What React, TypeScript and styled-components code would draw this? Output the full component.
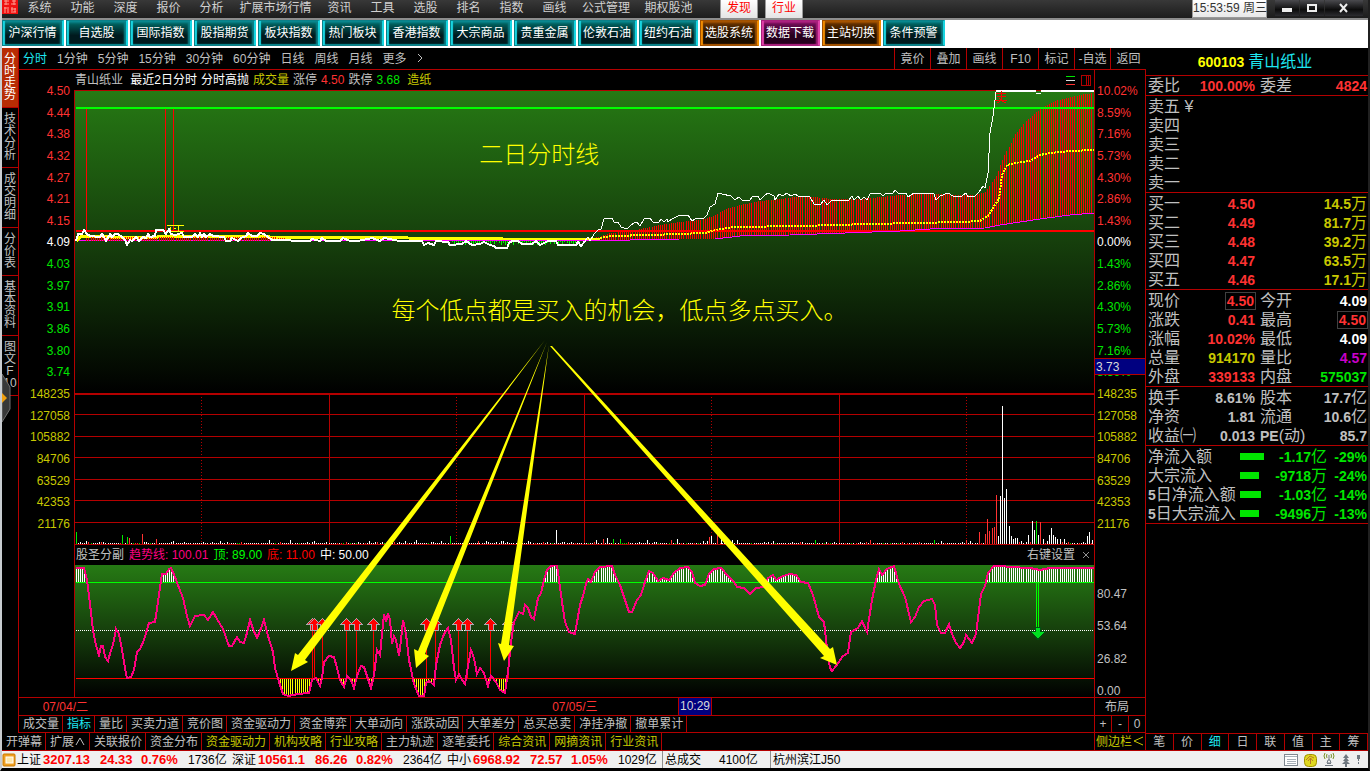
import React from 'react';
import styled, { createGlobalStyle, css } from 'styled-components';

const c = {
  line: '#b40000',
  red: '#ff3232',
  hot: '#ff0000',
  green: '#00e600',
  lime: '#00ff00',
  yellow: '#c8c800',
  bright: '#ffff00',
  cyan: '#1ee6f0',
  grey: '#c0c0c0',
  white: '#ffffff',
  magenta: '#c800c8',
  pink: '#ff0080',
  navy: '#000080',
};

const GlobalStyle = createGlobalStyle`
  *, *::before, *::after { box-sizing: border-box; }
  body {
    margin: 0;
    background: #000;
    color: ${c.grey};
    font: 12px/12px "Liberation Sans", "Noto Sans CJK SC", sans-serif;
  }
  button {
    margin: 0;
    padding: 0;
    border: 0;
    background: none;
    color: inherit;
    font: inherit;
    white-space: nowrap;
    cursor: pointer;
  }
  ul, ol { margin: 0; padding: 0; list-style: none; }
  table { border-collapse: collapse; }
`;

const Shell = styled.div`
  display: flex;
  flex-direction: column;
  height: 100vh;
  min-height: 640px;
  border-left: 2px solid #c8ccd0;
  border-right: 2px solid #202020;
  border-bottom: 3px solid #000;
`;

/* ---------- title bar ---------- */

const TitleBar = styled.header`
  display: flex;
  flex: none;
  height: 20px;
  border-bottom: 2px solid #8c8c8c;
  background: linear-gradient(#383838, #1c1c1c);
`;

const Menu = styled.nav`
  display: flex;
  height: 15px;
`;

const MenuItem = styled.button<{ $w: number }>`
  width: ${p => p.$w}px;
  color: #d0d0d0;
`;

const TopTab = styled.button`
  width: 38px;
  height: 18px;
  margin-left: 7px;
  padding-bottom: 2px;
  border: solid #9a9a9a;
  border-width: 0 1px;
  background: linear-gradient(#fff, #e4e4e4);
  color: ${c.hot};
`;

const TabGroup = styled.div`
  display: flex;
  margin-left: 12px;
`;

const Clock = styled.time`
  width: 75px;
  height: 18px;
  margin-left: auto;
  padding-top: 2px;
  border: 1px solid #999;
  border-top: 0;
  background: linear-gradient(#fff, #e8e8e8);
  color: #333;
  text-align: center;
  white-space: nowrap;
`;

const WindowButtons = styled.div`
  display: flex;
  gap: 1px;
  margin: 0 5px 0 8px;
`;

const WindowButton = styled.button<{ $w: number }>`
  display: grid;
  place-items: center;
  width: ${p => p.$w}px;
  height: 16px;
  background: linear-gradient(#4a4a4e, #0c0c0c 60%, #2c2c30);
`;

/* ---------- shortcut buttons ---------- */

type Tone = 'teal' | 'amber' | 'plum';
const tones: Record<Tone, [string, string, string, string]> = {
  teal: ['#00706c', '#001a1e', '#18d4e0', '#0a8088'],
  amber: ['#6e3600', '#1c0e00', '#f08c00', '#a05000'],
  plum: ['#7c1060', '#26001e', '#e040a8', '#a8207c'],
};

const Shortcuts = styled.nav`
  display: flex;
  flex: none;
  gap: 2px;
  height: 28px;
  padding-bottom: 2px;
  background: #fff;
`;

const Shortcut = styled.button<{ $tone: Tone; $narrow?: boolean }>`
  width: ${p => (p.$narrow ? 59 : 62)}px;
  border: 1px solid ${p => tones[p.$tone][3]};
  border-right: 2px solid ${p => tones[p.$tone][2]};
  background: linear-gradient(${p => tones[p.$tone][0]}, ${p => tones[p.$tone][1]} 60%);
  box-shadow: inset 2px 0 1px ${p => tones[p.$tone][2]}, inset -2px 0 2px ${p => tones[p.$tone][3]},
    inset 0 2px 2px ${p => tones[p.$tone][3]}, inset 0 -1px 1px ${p => tones[p.$tone][3]};
  color: #fff;
`;

/* ---------- workspace ---------- */

const Workspace = styled.div`
  display: flex;
  flex: 1;
  min-height: 0;
`;

const Main = styled.main`
  display: flex;
  flex: 1;
  flex-direction: column;
  min-width: 0;
`;

const Middle = styled.div`
  position: relative;
  display: flex;
  flex: 1;
  min-height: 0;
`;

const SideTabs = styled.nav`
  flex: none;
  width: 17px;
  border-right: 1px solid ${c.line};
`;

const SideTab = styled.button<{ $active?: boolean }>`
  display: block;
  width: 16px;
  padding: 5px 1px 6px;
  border-bottom: 1px solid ${c.line};
  background: ${p => (p.$active ? '#b82c04' : '#000')};
  color: ${p => (p.$active ? '#fff' : c.grey)};
  white-space: normal;
`;

const Drawer = styled.button`
  position: absolute;
  top: 326px;
  left: 0;
  width: 9px;
  height: 52px;
`;

const Board = styled.div`
  display: flex;
  flex: 1;
  flex-direction: column;
  min-width: 0;
`;

const Toolbar = styled.div`
  display: flex;
  flex: none;
  align-items: stretch;
  height: 22px;
  border-bottom: 1px solid ${c.line};
`;

const Periods = styled.div`
  display: flex;
  gap: 10px;
  padding-left: 4px;
`;

const Period = styled.button<{ $active?: boolean }>`
  color: ${p => (p.$active ? c.cyan : c.grey)};
`;

const Tools = styled.div`
  display: flex;
  margin-left: auto;
`;

const Tool = styled.button`
  width: 36px;
  border-left: 1px solid ${c.line};
`;

const Charts = styled.div`
  display: grid;
  flex: 1;
  grid-template-columns: 55px minmax(0, 1fr) 51px;
  grid-template-rows: minmax(0, 1fr);
  min-height: 0;
`;

const rows = css`
  display: grid;
  grid-template-rows: 20px minmax(0, 305fr) minmax(0, 150fr) 20px minmax(0, 132fr);
  grid-template-columns: minmax(0, 1fr);
`;

const LeftAxis = styled.div`
  ${rows}
`;

const RightAxis = styled.div`
  ${rows}
  position: relative;
  border-left: 1px solid ${c.line};
  border-right: 1px solid ${c.line};
  margin-left: -1px;
`;

const Scale = styled.ol<{ $align: 'left' | 'right' }>`
  display: flex;
  grid-row: 1 / 4;
  flex-direction: column;
  justify-content: space-between;
  padding: ${p => (p.$align === 'right' ? '15px 4px 15px 0' : '15px 0 15px 2px')};
  text-align: ${p => p.$align};
`;

const SubScale = styled.ol`
  display: flex;
  grid-row: 5;
  flex-direction: column;
  justify-content: space-between;
  padding: 23px 0 0 2px;
`;

const Ink = styled.li<{ $c: string }>`
  color: ${p => p.$c};
`;

const Cursor = styled.output`
  position: absolute;
  top: 288px;
  left: 0;
  right: 0;
  height: 17px;
  padding: 2px 0 0 1px;
  border: solid ${c.line};
  border-width: 1px 0;
  background: ${c.navy};
  color: #d8d8d8;
`;

const Plots = styled.div`
  ${rows}
  position: relative;
`;

const Caption = styled.div<{ $gap: number; $framed?: boolean }>`
  display: flex;
  align-items: center;
  gap: ${p => p.$gap}px;
  padding: 0 4px 0 1px;
  white-space: nowrap;
  border-left: ${p => (p.$framed ? `1px solid ${c.line}` : '0')};
`;

const Tag = styled.span<{ $c: string }>`
  color: ${p => p.$c};
`;

const CaptionTools = styled.div`
  display: flex;
  align-items: center;
  gap: 6px;
  margin-left: auto;
`;

const Plot = styled.svg`
  display: block;
  width: 100%;
  height: 100%;
  min-height: 0;
  border-left: 1px solid ${c.line};
  border-right: 1px solid ${c.line};
`;

const Overlay = styled.svg`
  position: absolute;
  inset: 0;
  width: 100%;
  height: 100%;
  pointer-events: none;
`;

const Note = styled.p<{ $x: number; $y: number }>`
  position: absolute;
  top: ${p => p.$y}%;
  left: ${p => p.$x}%;
  margin: 0;
  color: ${c.bright};
  font-size: 24px;
  line-height: 24px;
  font-weight: 300;
  white-space: nowrap;
`;

const DateRow = styled.div`
  display: flex;
  flex: none;
  height: 19px;
  border: solid ${c.line};
  border-width: 1px 0;
`;

const DateTrack = styled.div`
  position: relative;
  flex: 1;
  min-width: 0;
  border-right: 1px solid ${c.line};
`;

const DateMark = styled.time<{ $x: number; $boxed?: boolean }>`
  position: absolute;
  top: 0;
  left: ${p => p.$x}%;
  height: 17px;
  padding: 3px 0;
  color: ${c.red};
  white-space: nowrap;
  ${p =>
    p.$boxed &&
    css`
      padding: 2px 1px;
      border: solid ${c.line};
      border-width: 0 1px;
      background: ${c.navy};
      color: #d8d8d8;
    `}
`;

const Layout = styled.button`
  flex: none;
  width: 51px;
  padding: 0 6px 0 0;
  border-right: 1px solid ${c.line};
`;

const TabRow = styled.div<{ $h: number }>`
  display: flex;
  flex: none;
  height: ${p => p.$h}px;
  border-bottom: 1px solid ${c.line};
`;

const Tab = styled.button<{ $c?: string }>`
  padding: 0 3px 0 4px;
  border-right: 1px solid ${c.line};
  color: ${p => p.$c ?? c.grey};
`;

const TabEnd = styled.div`
  display: grid;
  grid-auto-flow: column;
  grid-auto-columns: 1fr;
  width: 52px;
  margin-left: auto;
  border-left: 1px solid ${c.line};
`;

const EndButton = styled.button<{ $c?: string }>`
  border-right: 1px solid ${c.line};
  color: ${p => p.$c ?? c.grey};
`;

/* ---------- quote panel ---------- */

const Quote = styled.aside`
  display: flex;
  flex: none;
  flex-direction: column;
  width: 222px;
`;

const QuoteTitle = styled.h1`
  display: flex;
  align-items: center;
  justify-content: center;
  gap: 4px;
  height: 28px;
  margin: 0;
  padding-right: 4px;
  border-bottom: 1px solid ${c.line};
  color: ${c.cyan};
  font-size: 16px;
  font-weight: 400;
  line-height: 16px;
`;

const Code = styled.strong`
  color: ${c.bright};
  font-size: 14px;
`;

const Section = styled.div<{ $flush?: boolean }>`
  padding-top: ${p => (p.$flush ? 0 : 1)}px;
  border-bottom: 1px solid ${c.line};
`;

const Grid = styled.table`
  width: 100%;
  table-layout: fixed;
`;

const Label = styled.th<{ $w?: number }>`
  width: ${p => (p.$w ? `${p.$w}px` : 'auto')};
  height: 19px;
  padding: 0 0 0 2px;
  font-size: 16px;
  font-weight: 400;
  line-height: 16px;
  text-align: left;
  white-space: nowrap;
`;

const Num = styled.td<{ $c: string; $w?: number }>`
  width: ${p => (p.$w ? `${p.$w}px` : 'auto')};
  height: 19px;
  padding: 0 1px 0 0;
  color: ${p => p.$c};
  font-size: 14px;
  font-weight: 700;
  line-height: 16px;
  text-align: right;
  white-space: nowrap;
`;

const Unit = styled.span`
  font-size: 16px;
  font-weight: 400;
`;

const Boxed = styled.span`
  display: inline-block;
  padding: 0 1px;
  margin-right: -1px;
  border: 1px solid #404040;
`;

const Digit = styled.b`
  font-size: 14px;
`;

const Inset = styled.span`
  padding-left: 2px;
`;

const Meter = styled.span<{ $w: number }>`
  display: block;
  width: ${p => p.$w}px;
  height: 7px;
  background: ${c.green};
`;

const QuoteTabs = styled.div`
  display: grid;
  grid-template-columns: repeat(8, 1fr);
  height: 18px;
  margin-top: auto;
  border: solid ${c.line};
  border-width: 1px 0;
`;

const QuoteTab = styled.button<{ $active?: boolean }>`
  border-right: 1px solid ${c.line};
  color: ${p => (p.$active ? c.cyan : c.grey)};
`;

/* ---------- status bar ---------- */

const StatusBar = styled.footer`
  display: flex;
  flex: none;
  align-items: center;
  height: 17px;
  background: #f0f0f0;
  color: #000;
  white-space: nowrap;
`;

const IndexCell = styled.div`
  display: grid;
  flex: none;
  grid-template-columns: 26px 57px 41px 47px 44px;
  align-items: center;
  width: 215px;
`;

const Rise = styled.b`
  color: ${c.hot};
  font-size: 13px;
`;

const StatusCell = styled.div<{ $w: number }>`
  display: flex;
  gap: 18px;
  width: ${p => p.$w}px;
  height: 17px;
  padding: 3px 0 0 2px;
  border-left: 1px solid #909090;
`;

const StatusIcons = styled.div`
  display: flex;
  align-items: center;
  gap: 6px;
  margin-left: auto;
  padding-right: 7px;
`;

/* ---------- data ---------- */

type Pt = [number, number];
const pts = (s: string): Pt[] => s.trim().split(/\s+/).map(p => p.split(',').map(Number) as Pt);
const str = (p: Pt[]) => p.map(q => q.join(',')).join(' ');

const at = (line: Pt[], x: number) => {
  for (let i = 1; i < line.length; i++) {
    const [x0, y0] = line[i - 1];
    const [x1, y1] = line[i];
    if (x <= x1) return y0 + ((y1 - y0) * (x - x0)) / (x1 - x0 || 1);
  }
  return line[line.length - 1][1];
};

const priceA = pts(`76,241 78,234 82,234 84,230 87,234 90,236 100,237 102,234 104,237 106,241 110,234 112,237
115,234 118,234 122,237 125,240 127,245 130,240 132,241 136,237 139,241 143,237 146,238 148,234 150,237 155,236
156,230 163,230 166,234 169,229 171,234 175,235 182,233 184,237 192,237 195,234 198,237 200,233 202,237 204,234
206,237 210,234 213,236 224,237 226,241 230,241 232,238 238,241 241,238 246,236 248,233 252,236 257,236 260,233
264,234 272,240 310,241 312,239 320,241 322,238 326,241 340,241 343,238 350,241 358,241 372,238 380,241 384,238
400,241 422,241 424,245 428,243 434,245 436,241 448,242 450,245 462,244 466,241 472,245 480,244 484,242 490,245
494,246 496,248 507,248 509,243 512,241 518,241 522,244 532,244 536,241 540,245 548,241 556,241 558,245 576,245
578,242 581,246 585,241`);
const priceB = pts(`585,241 588,237 590,241 594,234 598,230 601,229 604,219 612,218 614,222 618,222 621,227 627,229
630,226 634,223 637,222 640,226 644,219 650,218 653,222 659,222 661,219 664,222 667,219 668,222 672,219 678,216
688,215 692,221 695,219 704,218 707,215 710,207 715,204 718,193 722,194 731,196 735,200 739,197 743,201 750,200
753,196 758,196 760,200 764,196 768,193 774,196 775,200 779,194 783,196 787,193 791,196 795,194 798,196 810,197
814,204 820,205 824,200 827,205 832,200 849,200 852,196 854,200 858,196 861,200 864,197 867,200 870,194 880,193
883,196 886,193 893,193 895,190 898,193 906,193 908,197 914,193 934,194 936,200 940,196 948,193 953,196 962,196
966,193 968,197 975,196 979,192 983,186 985,188 988,173 990,133 993,116 996,92`);
const envelope = pts(`591,239 600,236 610,233 630,231 645,228 660,225 680,222 700,220 710,217 717,214 725,209
740,205 760,201 780,199 800,196 815,197 830,199 860,199 880,197 900,195 920,194 940,194 960,195 975,195 985,192
990,185 996,176 1000,165 1005,153 1010,145 1015,134 1025,122 1040,109 1055,101 1070,97 1085,94 1094,93`);
const base = pts(`76,241 630,240 680,239 715,239 740,236 790,235 845,233 900,231 930,229 985,228 1000,225
1040,219 1070,215 1094,213`);
const avgA = pts(`76,241 80,237 90,236 110,237 150,238 165,236 200,236 270,237 408,238 503,239 600,239`);
const avgB = pts(`600,238 612,236 650,235 705,233 712,231 720,229 735,227 800,226 870,224 960,222 980,221 988,216
995,205 999,199 1002,175 1007,165 1020,162 1030,161 1040,155 1050,153 1070,151 1094,150`);
const trend = pts(`76,568 84,568 87,580 90,604 93,630 96,645 99,655 101,646 103,646 105,657 108,661 111,650 113,645
116,629 119,634 122,650 125,668 127,678 131,677 134,670 137,652 140,649 144,640 149,623 155,622 158,602 162,574
166,574 169,569 171,568 175,577 179,588 183,598 187,616 190,626 195,616 204,615 208,620 213,612 217,619 223,629
229,646 232,646 237,637 240,642 244,643 247,633 250,620 253,629 257,638 260,631 264,620 268,636 273,652 275,668
279,682 283,694 288,696 298,694 309,693 312,680 316,678 320,686 322,678 324,662 329,656 334,657 337,668 340,680
344,687 347,676 351,680 354,688 357,676 361,666 364,667 368,679 371,688 374,675 377,650 380,655 384,614 386,622
388,613 390,620 392,644 394,636 396,640 399,656 401,640 403,620 406,634 409,660 414,684 419,696 424,696 426,683
429,681 434,685 436,665 440,645 444,634 448,628 451,640 454,668 456,680 459,674 462,680 465,684 468,666 471,650
474,658 477,674 480,668 484,673 488,686 491,676 496,682 500,690 505,693 508,672 511,643 514,622 519,612 523,614
525,605 528,608 531,617 534,619 538,598 541,593 544,580 547,570 551,566 557,565 559,580 562,602 565,622 569,632
575,634 580,605 583,596 586,584 588,579 591,582 595,572 600,567 612,566 615,575 620,585 625,600 629,612 632,612
637,600 641,595 645,582 649,571 653,573 658,581 663,578 669,580 674,573 680,568 688,567 692,572 695,583 700,586
705,585 709,574 714,569 721,568 728,576 734,582 737,587 744,588 750,594 756,588 764,587 768,578 773,575 776,580
783,576 790,574 796,575 801,582 808,583 813,595 819,617 824,622 827,648 830,668 832,671 836,666 843,656 848,653
851,632 858,628 862,621 867,632 872,600 876,580 879,569 882,575 887,569 894,566 899,584 905,597 911,622 915,617
919,607 924,601 932,599 935,605 937,625 941,633 945,633 949,624 952,634 956,643 960,648 964,642 966,635 972,643
976,634 979,610 981,594 985,586 988,573 994,566 1002,566 1010,567 1030,568 1040,570 1050,568 1094,568`);

const range = (a: number, b: number, step: number) => {
  const out: number[] = [];
  for (let i = a; i < b; i += step) out.push(i);
  return out;
};

// One slot per trading minute: 17 columns for every 8 minutes.
const minutes = range(-447, 32, 1).map(n => 1026 + 2 * n + Math.floor(n / 8));

const bars = (xs: number[], top: (x: number) => number, bottom: (x: number) => number) =>
  xs.map(x => `M${x},${Math.round(top(x))}V${Math.round(bottom(x))}h1V${Math.round(top(x))}z`).join('');

const envelopeBars = bars(minutes.filter(x => x > 590), x => at(envelope, x), x => at(base, x));
const dipBars = bars(minutes.filter(x => x > 450 && x < 580), () => 241, x => 242 + ((x * 7) % 4));
const riseBars = bars(minutes.filter(x => x > 84 && x < 285), x => 238 - ((x * 3) % 2), () => 241);
const topBars = bars(minutes.filter(x => at(trend, x) < 581), x => at(trend, x), () => 582);
const lowBars = bars(minutes.filter(x => at(trend, x) > 680), () => 679, x => at(trend, x));

type Spike = [number, number, string];
const spikes: Spike[] = [
  [76, 12, 'g'], [122, 9, 'g'], [127, 7, 'g'], [129, 6, 'r'], [142, 10, 'r'], [156, 5, 'r'], [220, 3, 'w'],
  [269, 4, 'w'], [290, 4, 'w'], [416, 4, 'w'], [450, 8, 'g'], [478, 3, 'r'], [556, 14, 'w'], [596, 4, 'w'],
  [603, 5, 'r'], [607, 6, 'w'], [613, 5, 'g'], [620, 5, 'g'], [647, 4, 'w'], [671, 4, 'r'], [677, 5, 'w'],
  [709, 7, 'r'], [711, 8, 'w'], [717, 10, 'r'], [721, 7, 'w'], [732, 4, 'w'], [737, 4, 'w'], [815, 4, 'g'],
  [870, 4, 'r'], [934, 4, 'g'], [966, 4, 'r'], [979, 12, 'r'], [985, 10, 'r'], [987, 25, 'r'], [989, 13, 'r'],
  [992, 16, 'r'], [994, 17, 'r'], [996, 49, 'r'], [998, 8, 'w'], [1000, 48, 'w'], [1002, 138, 'w'],
  [1004, 46, 'w'], [1006, 55, 'w'], [1009, 18, 'w'], [1011, 8, 'w'], [1013, 5, 'w'], [1015, 6, 'w'], [1017, 6, 'w'],
  [1028, 9, 'w'], [1032, 23, 'w'], [1034, 14, 'w'], [1036, 23, 'g'], [1038, 9, 'w'], [1040, 22, 'r'],
  [1043, 5, 'w'], [1049, 9, 'w'], [1051, 16, 'w'], [1053, 9, 'w'], [1055, 7, 'w'], [1057, 5, 'w'], [1060, 5, 'w'],
  [1064, 5, 'w'], [1087, 8, 'w'], [1089, 12, 'w'], [1092, 4, 'w'],
];
const hue: Record<string, string> = { g: c.green, r: c.red, w: '#fff' };

const upMarks = [312, 314, 322, 346, 356, 373, 426, 435, 458, 467, 490, 508];

const priceScale = ['4.50', '4.44', '4.38', '4.32', '4.27', '4.21', '4.15', '4.09', '4.03', '3.97', '3.91', '3.86', '3.80', '3.74'];
const pctScale = ['10.02%', '8.59%', '7.16%', '5.73%', '4.30%', '2.86%', '1.43%', '0.00%', '1.43%', '2.86%', '4.30%', '5.73%', '7.16%', '8.59%'];
const volScale = ['148235', '127058', '105882', '84706', '63529', '42353', '21176'];
const scaleColour = (i: number) => (i < 7 ? c.red : i === 7 ? '#fff' : i < 14 ? c.green : c.yellow);

const menu: [string, number][] = [
  ['系统', 43], ['功能', 43], ['深度', 43], ['报价', 43], ['分析', 43], ['扩展市场行情', 85], ['资讯', 43],
  ['工具', 43], ['选股', 43], ['排名', 43], ['指数', 43], ['画线', 43], ['公式管理', 60], ['期权股池', 65],
];
const shortcuts: [string, Tone, boolean][] = [
  ['沪深行情', 'teal', false], ['自选股', 'teal', false], ['国际指数', 'teal', false], ['股指期货', 'teal', false],
  ['板块指数', 'teal', false], ['热门板块', 'teal', false], ['香港指数', 'teal', false], ['大宗商品', 'teal', false],
  ['贵重金属', 'teal', false], ['伦敦石油', 'teal', true], ['纽约石油', 'teal', true], ['选股系统', 'amber', true],
  ['数据下载', 'plum', true], ['主站切换', 'amber', true], ['条件预警', 'teal', false],
];
const sideTabs = ['分时走势', '技术分析', '成交明细', '分价表', '基本资料', '图文F 10'];
const periods = ['分时', '1分钟', '5分钟', '15分钟', '30分钟', '60分钟', '日线', '周线', '月线', '更多'];
const tools = ['竟价', '叠加', '画线', 'F10', '标记', '-自选', '返回'];
const tabs1 = ['成交量', '指标', '量比', '买卖力道', '竞价图', '资金驱动力', '资金博弈', '大单动向', '涨跌动因', '大单差分', '总买总卖', '净挂净撤', '撤单累计'];
const tabs2 = ['开弹幕', '扩展', '关联报价', '资金分布', '资金驱动力', '机构攻略', '行业攻略', '主力轨迹', '逐笔委托', '综合资讯', '网摘资讯', '行业资讯'];
const tabs2Yellow = ['资金驱动力', '机构攻略', '行业攻略', '综合资讯', '网摘资讯', '行业资讯'];
const quoteTabs = ['笔', '价', '细', '日', '联', '值', '主', '筹'];

const buys = [
  ['买一', '4.50', '14.5'], ['买二', '4.49', '81.7'], ['买三', '4.48', '39.2'],
  ['买四', '4.47', '63.5'], ['买五', '4.46', '17.1'],
];
type Pair = { a: string; av: string; ac: string; abox?: boolean; b: React.ReactNode; bv: string; bc: string; bbox?: boolean; unit?: string };
const summary: Pair[] = [
  { a: '现价', av: '4.50', ac: c.red, abox: true, b: '今开', bv: '4.09', bc: '#fff' },
  { a: '涨跌', av: '0.41', ac: c.red, b: '最高', bv: '4.50', bc: c.red, bbox: true },
  { a: '涨幅', av: '10.02%', ac: c.red, b: '最低', bv: '4.09', bc: '#fff' },
  { a: '总量', av: '914170', ac: c.yellow, b: '量比', bv: '4.57', bc: c.magenta },
  { a: '外盘', av: '339133', ac: c.red, b: '内盘', bv: '575037', bc: c.green },
];
const capital: Pair[] = [
  { a: '换手', av: '8.61%', ac: c.grey, b: '股本', bv: '17.7', bc: c.grey, unit: '亿' },
  { a: '净资', av: '1.81', ac: c.grey, b: '流通', bv: '10.6', bc: c.grey, unit: '亿' },
  { a: '收益㈠', av: '0.013', ac: c.grey, b: <><Digit>PE</Digit>(动)</>, bv: '85.7', bc: c.grey },
];
const flows: [string, string, number, string, string, string][] = [
  ['', '净流入额', 24, '-1.17', '亿', '-29%'],
  ['', '大宗流入', 19, '-9718', '万', '-24%'],
  ['5', '日净流入额', 21, '-1.03', '亿', '-14%'],
  ['5', '日大宗流入', 19, '-9496', '万', '-13%'],
];
const indices = [
  ['上证', '3207.13', '24.33', '0.76%', '1736亿'],
  ['深证', '10561.1', '86.26', '0.82%', '2364亿'],
  ['中小', '6968.92', '72.57', '1.05%', '1029亿'],
];

/* ---------- pieces ---------- */

const Backdrop = ({ id, x, y, w, h }: { id: string; x: number; y: number; w: number; h: number }) => (
  <>
    <defs>
      <linearGradient id={id} x1="0" y1="0" x2="0" y2="1">
        <stop offset="0" stopColor="#267a14" />
        <stop offset="0.5" stopColor="#163f0c" />
        <stop offset="1" stopColor="#000" />
      </linearGradient>
    </defs>
    <rect x={x} y={y} width={w} height={h} fill={`url(#${id})`} />
  </>
);

const PriceChart = () => (
  <Plot viewBox="75 90 1019 305" preserveAspectRatio="none" shapeRendering="crispEdges" fill="none" role="img" aria-label="分时走势">
    <Backdrop id="priceFill" x={75} y={90} w={1019} h={303} />
    <path d="M75,90.5H1094" stroke={c.line} />
    <path d="M86.5,108V231M165.5,108V231M173.5,108V231" stroke={c.hot} />
    <path d={envelopeBars} fill={c.hot} />
    <path d="M76,108H1094" stroke={c.lime} strokeWidth="2" />
    <path d="M76,231H1094" stroke={c.hot} strokeWidth="2" />
    <path d={dipBars} fill={c.lime} />
    <polyline points={str(base)} stroke="#ff00ff" />
    <polyline points={str(avgA)} stroke={c.bright} strokeWidth="3" />
    <path d={riseBars} fill={c.hot} />
    <polyline points={str(avgB)} stroke={c.bright} strokeWidth="2" strokeDasharray="2 1" />
    <polyline points={str(priceA)} stroke="#fff" strokeWidth="2" />
    <polyline points={str(priceB)} stroke="#fff" />
    <path d="M996,91H1036M1041,91H1094" stroke="#fff" strokeWidth="2" />
    <path d="M1036,93.5H1041" stroke="#fff" />
    <path d="M167,225.5h17M171,231.5h13M170,227v3M178,226v5M174,228h2" stroke={c.bright} />
    <path d="M996,93.5h10M1001.5,91v5M997,96.5h9M999,98.5l2,1M995,100.5h12M1001.5,97v3l-4,3M1002,101l4,2" stroke={c.hot} />
    <path d="M75,394H1094" stroke={c.line} strokeWidth="2" />
  </Plot>
);

const VolumeChart = () => (
  <Plot viewBox="75 395 1019 150" preserveAspectRatio="none" shapeRendering="crispEdges" fill="none" role="img" aria-label="成交量">
    <path d="M75,414.5H1094M75,436.5H1094M75,457.5H1094M75,479.5H1094M75,500.5H1094M75,522.5H1094" stroke={c.line} />
    <path d="M329.5,395V544M584.5,395V544M839.5,395V544" stroke={c.line} />
    <path d="M201.5,397V544M456.5,397V544M711.5,397V544M966.5,397V544" stroke={c.line} strokeDasharray="1 2" />
    {minutes.map(x => {
      const k = (x * 37 + ((x * x) % 61)) % 23;
      const h = k === 0 ? 3 : k < 4 ? 2 : 1;
      const colour = k === 5 || k === 2 ? c.red : k === 9 || k === 13 ? c.green : '#fff';
      return <rect key={x} x={x} y={544 - h} width="1" height={h} fill={colour} />;
    })}
    {spikes.map(([x, h, k]) => (
      <rect key={x} x={x} y={544 - h} width="1" height={h} fill={hue[k]} />
    ))}
    <path d="M75,544.5H1094" stroke={c.line} />
  </Plot>
);

const TrendChart = () => (
  <Plot viewBox="75 565 1019 132" preserveAspectRatio="none" shapeRendering="crispEdges" fill="none" role="img" aria-label="趋势线">
    <Backdrop id="trendFill" x={75} y={565} w={1019} h={132} />
    <path d={topBars} fill="#fff" />
    <path d={lowBars} fill={c.bright} />
    <path d="M76,582.5H1094" stroke={c.lime} />
    <path d="M76,630.5H1094" stroke="#fff" strokeDasharray="1 1" />
    <path d="M76,678.5H1094" stroke={c.hot} />
    {upMarks.map(x => (
      <g key={x}>
        <path d={`M${x + 0.5},630V678`} stroke={c.hot} />
        <path d={`M${x + 0.5},619l5,5h-3v6h-4v-6h-3z`} fill={c.hot} stroke="#b0a8b0" strokeWidth="2" paintOrder="stroke" />
      </g>
    ))}
    <polyline points={str(trend)} stroke={c.pink} strokeWidth="2" />
    <path d="M1036.5,582V630M1038.5,582V630" stroke={c.lime} />
    <path d="M1036,628h4v4h4l-6,7l-6,-7h4z" fill="#00e020" stroke="#005010" strokeWidth="2" paintOrder="stroke" />
  </Plot>
);

const pairValue = (v: string, boxed?: boolean) => (boxed ? <Boxed>{v}</Boxed> : v);

const Pairs = ({ data }: { data: Pair[] }) => (
  <Section>
    <Grid>
      <tbody>
        {data.map(r => (
          <tr key={r.a}>
            <Label $w={50}>{r.a}</Label>
            <Num $w={60} $c={r.ac}>{pairValue(r.av, r.abox)}</Num>
            <Label $w={56}><Inset>{r.b}</Inset></Label>
            <Num $c={r.bc}>{pairValue(r.bv, r.bbox)}{r.unit && <Unit>{r.unit}</Unit>}</Num>
          </tr>
        ))}
      </tbody>
    </Grid>
  </Section>
);

export default function App() {
  return (
    <Shell>
      <GlobalStyle />
      <TitleBar>
        <svg width="16" height="14" viewBox="0 0 16 14" aria-hidden="true">
          <rect width="16" height="14" fill="#f01010" />
          <path d="M2,1h5M4,0v5M2,4h5M10,1h4M12,0v5M9,4h5M2,8h5M3,7v6M6,9v4M10,7v6M9,9h5M13,8v4M11,12h3" stroke="#ff9c90" fill="none" />
        </svg>
        <Menu>
          {menu.map(([t, w]) => <MenuItem key={t} $w={w}>{t}</MenuItem>)}
        </Menu>
        <TabGroup>
          <TopTab>发现</TopTab>
          <TopTab>行业</TopTab>
        </TabGroup>
        <Clock>15:53:59 周三</Clock>
        <WindowButtons>
          <WindowButton $w={24} aria-label="最小化">
            <svg width="12" height="10"><rect x="1" y="5" width="10" height="4" fill="#eee" /></svg>
          </WindowButton>
          <WindowButton $w={24} aria-label="最大化">
            <svg width="12" height="10"><rect x="2" y="2" width="8" height="6" fill="none" stroke="#eee" strokeWidth="2" /></svg>
          </WindowButton>
          <WindowButton $w={38} aria-label="关闭">
            <svg width="10" height="10"><path d="M1,1L8,9M8,1L1,9" stroke="#eee" strokeWidth="2" /></svg>
          </WindowButton>
        </WindowButtons>
      </TitleBar>

      <Shortcuts>
        {shortcuts.map(([t, tone, narrow]) => (
          <Shortcut key={t} $tone={tone} $narrow={narrow}>{t}</Shortcut>
        ))}
      </Shortcuts>

      <Workspace>
        <Main>
          <Middle>
            <SideTabs>
              {sideTabs.map((t, i) => <SideTab key={t} $active={i === 0}>{t}</SideTab>)}
            </SideTabs>
            <Drawer aria-label="展开侧栏">
              <svg width="9" height="52" viewBox="0 0 9 52">
                <path d="M0,0L8,13V35L0,48z" fill="#383838" stroke="#707070" />
                <path d="M0,19L5,24L0,29z" fill="#f0a010" />
              </svg>
            </Drawer>
            <Board>
              <Toolbar>
                <Periods>
                  {periods.map((t, i) => <Period key={t} $active={i === 0}>{t}</Period>)}
                  <Period aria-label="更多周期">
                    <svg width="6" height="10"><path d="M1,1L5,5L1,9" fill="none" stroke={c.grey} /></svg>
                  </Period>
                </Periods>
                <Tools>
                  {tools.map(t => <Tool key={t}>{t}</Tool>)}
                </Tools>
              </Toolbar>
              <Charts>
                <LeftAxis>
                  <Scale $align="right">
                    {[...priceScale, ...volScale].map((t, i) => <Ink key={t} $c={scaleColour(i)}>{t}</Ink>)}
                  </Scale>
                </LeftAxis>
                <Plots>
                  <Caption $gap={4}>
                    <span>青山纸业</span>
                    <Tag $c={c.white}>&nbsp;最近2日分时</Tag>
                    <Tag $c={c.white}>分时高抛</Tag>
                    <Tag $c={c.yellow}>成交量</Tag>
                    <span>涨停</span>
                    <Tag $c={c.red}>4.50</Tag>
                    <span>跌停</span>
                    <Tag $c={c.green}>3.68</Tag>
                    <Tag $c={c.yellow}>&nbsp;造纸</Tag>
                    <CaptionTools>
                      <svg width="9" height="10" shapeRendering="crispEdges">
                        <path d="M0,1.5h9" stroke={c.green} /><path d="M0,5.5h9" stroke="#ddd" /><path d="M0,9.5h9" stroke={c.red} />
                      </svg>
                      <svg width="10" height="11" shapeRendering="crispEdges">
                        <path d="M.5,.5h9v10h-9zM5.5,0v11M7.5,0v11" fill="none" stroke={c.line} />
                      </svg>
                    </CaptionTools>
                  </Caption>
                  <PriceChart />
                  <VolumeChart />
                  <Caption $gap={5} $framed>
                    <span>股圣分副</span>
                    <Tag $c={c.pink}>趋势线: 100.01</Tag>
                    <Tag $c={c.lime}>顶: 89.00</Tag>
                    <Tag $c={c.hot}>底: 11.00</Tag>
                    <Tag $c={c.white}>中: 50.00</Tag>
                    <CaptionTools>
                      <span>右键设置</span>
                      <svg width="10" height="8"><path d="M2,1L8,7M8,1L2,7" stroke="#909090" /></svg>
                    </CaptionTools>
                  </Caption>
                  <TrendChart />
                  <Note $x={39.7} $y={11.7}>二日分时线</Note>
                  <Note $x={31.1} $y={36.6}>每个低点都是买入的机会，低点多点买入。</Note>
                  <Overlay viewBox="74 70 1021 627" preserveAspectRatio="none" fill={c.bright}>
                    <polygon points="545,340 298,655 295,653 291,671 308,662 305,660" />
                    <polygon points="547,342 418,651 414,649 416,668 429,656 425,654" />
                    <polygon points="549,345 501,644 498,643 504,661 514,646 509,645" />
                    <polygon points="550,346 552,346 830,649 833,647 837,665 820,658 824,656" />
                  </Overlay>
                </Plots>
                <RightAxis>
                  <Scale $align="left">
                    {[...pctScale, ...volScale].map((t, i) => <Ink key={i} $c={scaleColour(i)}>{t}</Ink>)}
                  </Scale>
                  <Cursor>3.73</Cursor>
                  <SubScale>
                    {['80.47', '53.64', '26.82', '0.00'].map(t => <Ink key={t} $c={c.grey}>{t}</Ink>)}
                  </SubScale>
                </RightAxis>
              </Charts>
              <DateRow>
                <DateTrack>
                  <DateMark $x={2.2}>07/04/二</DateMark>
                  <DateMark $x={49.6}>07/05/三</DateMark>
                  <DateMark $x={61.3} $boxed>10:29</DateMark>
                </DateTrack>
                <Layout>布局</Layout>
              </DateRow>
              <TabRow $h={17}>
                {tabs1.map((t, i) => <Tab key={t} $c={i === 1 ? c.cyan : undefined}>{t}</Tab>)}
                <TabEnd>
                  <EndButton>+</EndButton>
                  <EndButton>-</EndButton>
                  <EndButton>0</EndButton>
                </TabEnd>
              </TabRow>
            </Board>
          </Middle>
          <TabRow $h={18}>
            {tabs2.map(t => (
              <Tab key={t} $c={tabs2Yellow.includes(t) ? c.yellow : undefined}>
                {t}
                {t === '扩展' && <svg width="12" height="9"><path d="M2,8L6,1L10,8" fill="none" stroke={c.grey} /></svg>}
              </Tab>
            ))}
            <TabEnd>
              <EndButton $c={c.yellow}>
                侧边栏
                <svg width="12" height="10"><path d="M11,1L2,5L11,9" fill="none" stroke={c.yellow} /></svg>
              </EndButton>
            </TabEnd>
          </TabRow>
        </Main>

        <Quote>
          <QuoteTitle><Code>600103</Code>青山纸业</QuoteTitle>
          <Section $flush>
            <Grid>
              <tbody>
                <tr>
                  <Label $w={50}>委比</Label>
                  <Num $w={60} $c={c.red}>100.00%</Num>
                  <Label $w={56}><Inset>委差</Inset></Label>
                  <Num $c={c.red}>4824</Num>
                </tr>
              </tbody>
            </Grid>
          </Section>
          <Section>
            <Grid>
              <tbody>
                {['卖五 ¥', '卖四', '卖三', '卖二', '卖一'].map(t => <tr key={t}><Label>{t}</Label></tr>)}
              </tbody>
            </Grid>
          </Section>
          <Section>
            <Grid>
              <tbody>
                {buys.map(([a, p, v]) => (
                  <tr key={a}>
                    <Label $w={50}>{a}</Label>
                    <Num $w={60} $c={c.red}>{p}</Num>
                    <Num $c={c.yellow}>{v}<Unit>万</Unit></Num>
                  </tr>
                ))}
              </tbody>
            </Grid>
          </Section>
          <Pairs data={summary} />
          <Pairs data={capital} />
          <Section>
            <Grid>
              <tbody>
                {flows.map(([d, t, w, v, u, pct]) => (
                  <tr key={d + t}>
                    <Label $w={94}>{d && <Digit>{d}</Digit>}{t}</Label>
                    <Num $w={26} $c={c.green}><Meter $w={w} /></Num>
                    <Num $w={62} $c={c.green}>{v}<Unit>{u}</Unit></Num>
                    <Num $c={c.green}>{pct}</Num>
                  </tr>
                ))}
              </tbody>
            </Grid>
          </Section>
          <QuoteTabs>
            {quoteTabs.map(t => <QuoteTab key={t} $active={t === '细'}>{t}</QuoteTab>)}
          </QuoteTabs>
        </Quote>
      </Workspace>

      <StatusBar>
        <svg width="15" height="15" viewBox="0 0 15 15" aria-hidden="true">
          <rect x="1" y="2" width="12" height="12" rx="1" fill="#f0a020" stroke="#c87800" />
          <rect x="4" y="5" width="7" height="6" fill="#ffe8a8" stroke="#fff" />
        </svg>
        {indices.map(([n, a, b, p, v]) => (
          <IndexCell key={n}>
            <span>{n}</span><Rise>{a}</Rise><Rise>{b}</Rise><Rise>{p}</Rise><span>{v}</span>
          </IndexCell>
        ))}
        <StatusCell $w={108}><span>总成交</span><span>4100亿</span></StatusCell>
        <StatusCell $w={100}>杭州滨江J50</StatusCell>
        <StatusIcons>
          <svg width="14" height="14" viewBox="0 0 14 14">
            <rect x=".5" y="1.5" width="13" height="11" fill="#fff" stroke="#808890" />
            <path d="M1,3.5h12M3,6.5h9M3,8.5h9M3,10.5h9" stroke="#a8b0b8" />
          </svg>
          <svg width="13" height="14" viewBox="0 0 13 14">
            <rect x=".5" y="1.5" width="12" height="12" rx="4" fill="#e0d820" stroke="#a09000" />
            <path d="M2,7L6,3L10,5M6.5,5v6M4,8l2.500,-3l2.500,3" fill="none" stroke="#b87828" />
          </svg>
          <svg width="12" height="15" viewBox="0 0 12 15" fill="none" stroke="#707880">
            <path d="M2,1q-2,3 0,6M10,1q2,3 0,6M4,2q-1,2 0,4M8,2q1,2 0,4" stroke="#789028" />
            <path d="M6,3v5M5,8h2l1,3h-4zM2,13.500h8M4,11.500h4" />
          </svg>
          <svg width="20" height="14" viewBox="3 0 20 14" fill="#707880">
            <path d="M8,1l3,4h-6zM8,4l3,4h-6zM8,7l4,4h-8zM7,10h2v4h-2z" />
            <path d="M19,2h3v4h-1v2h-1v-2h-1zM20,9h1v2h-1z" />
          </svg>
        </StatusIcons>
      </StatusBar>
    </Shell>
  );
}
